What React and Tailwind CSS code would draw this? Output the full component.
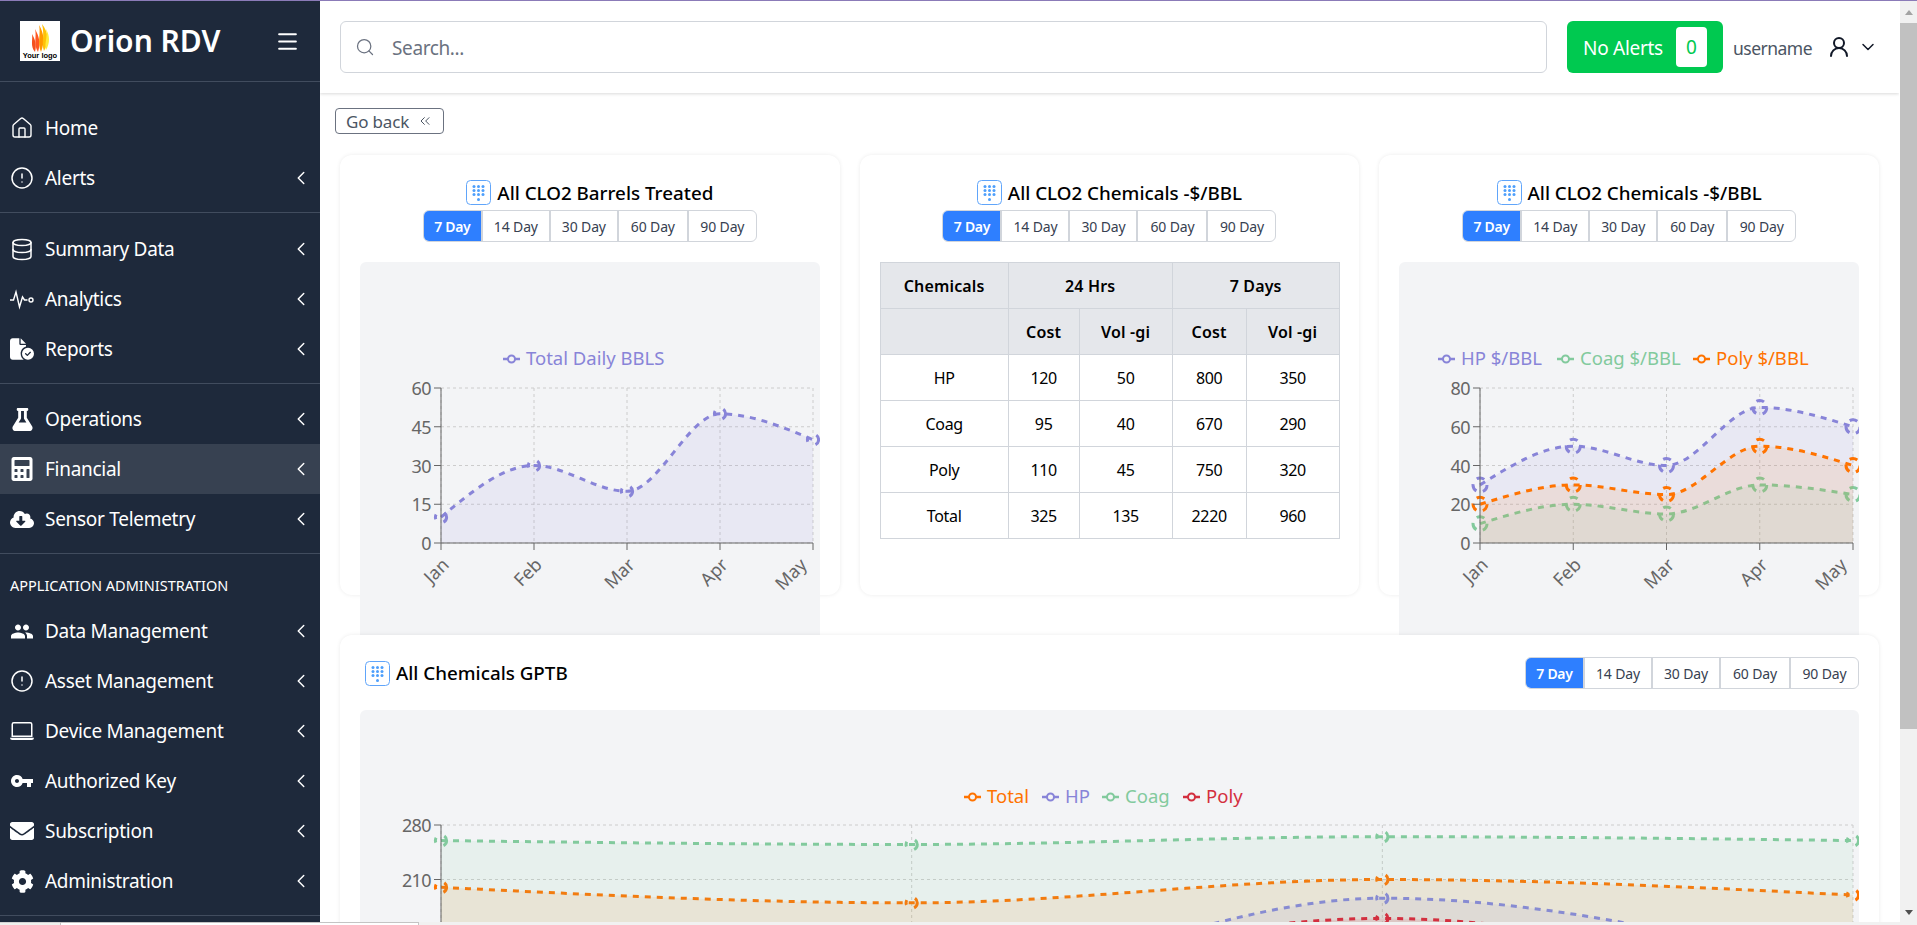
import React from "react";
import { House, CircleAlert, Database, Search, ChevronLeft, ChevronDown, ChevronsLeft, UserRound, Menu } from "lucide-react";
import { FaFlask, FaCalculator, FaCloudDownloadAlt, FaCog, FaEnvelope } from "react-icons/fa";
import { FaFileCircleCheck } from "react-icons/fa6";
import { MdPeople, MdVpnKey } from "react-icons/md";
import { BsLaptop } from "react-icons/bs";

const PURPLE = "#8884d8";
const GREEN = "#82ca9d";
const ORANGE = "#ff7300";
const RED = "#d32f3f";

function Pulse({ size }) {
  return (
    <svg width={size} height={size} viewBox="0 0 24 24" fill="none" stroke="currentColor" strokeWidth="1.4">
      <path d="M0 13h3.5l2.5-8 3.5 15 3-10 2 3h3" />
      <circle cx="21" cy="13" r="2" />
    </svg>
  );
}

function Logo() {
  return (
    <div className="w-10 h-10 bg-white flex flex-col items-center shrink-0">
      <svg width="20" height="30" viewBox="0 0 20 30" className="mt-[2px] shrink-0">
        <path d="M5 29C0 23 3 17 2 11c3 5 5 11 3 18z" fill="#f4511e" />
        <path d="M8 29C3 21 7 13 5 6c4 7 6 14 3 23z" fill="#ff5722" />
        <path d="M11 29C7 20 11 10 9 2c5 8 6 17 2 27z" fill="#ff9800" />
        <path d="M14 28c-3-8 1-15-2-27 6 8 8 17 2 27z" fill="#ffc107" />
        <path d="M16 27c-2-7 2-12 0-21 4 7 4 14 0 21z" fill="#ffeb3b" />
      </svg>
      <span className="text-[7.5px] leading-[8px] font-bold text-black -mt-[1px] whitespace-nowrap font-['Liberation_Sans',sans-serif]">Your logo</span>
    </div>
  );
}

function NavItem({ icon, label, arrow = true, active = false }) {
  return (
    <div className={"flex items-center h-[50px] pl-[10px] pr-[8px] text-[19px] text-white " + (active ? "bg-[#374151]" : "")}>
      <span className="w-6 flex justify-center shrink-0">{icon}</span>
      <span className="ml-[11px] flex-1 tracking-[-0.015em]">{label}</span>
      {arrow && <ChevronLeft size={22} strokeWidth={1.6} />}
    </div>
  );
}

function Sidebar() {
  const line = "border-b border-[#414c5e]";
  return (
    <aside className="w-[320px] shrink-0 bg-[#1e293b] flex flex-col overflow-hidden">
      <div className={"h-[81px] flex items-center pl-5 pr-[20px] " + line}>
        <Logo />
        <span className="ml-[10px] flex-1 text-[30px] leading-none font-semibold text-white">Orion RDV</span>
        <Menu size={25} className="text-white" />
      </div>
      <div className={"pt-[21px] pb-[9px] " + line}>
        <NavItem icon={<House size={28} strokeWidth={1.4} />} label="Home" arrow={false} />
        <NavItem icon={<CircleAlert size={26} strokeWidth={1.5} />} label="Alerts" />
      </div>
      <div className={"pt-[11px] pb-[9px] " + line}>
        <NavItem icon={<Database size={27} strokeWidth={1.5} />} label="Summary Data" />
        <NavItem icon={<Pulse size={24} />} label="Analytics" />
        <NavItem icon={<FaFileCircleCheck size={24} />} label="Reports" />
      </div>
      <div className={"pt-[10px] pb-[9px] " + line}>
        <NavItem icon={<FaFlask size={23} />} label="Operations" />
        <NavItem icon={<FaCalculator size={24} />} label="Financial" active />
        <NavItem icon={<FaCloudDownloadAlt size={25} />} label="Sensor Telemetry" />
      </div>
      <div className="pt-[21px] pb-[11px] pl-[10px] text-[14.5px] leading-[20px] text-white">APPLICATION ADMINISTRATION</div>
      <div className={"pb-[9px] " + line}>
        <NavItem icon={<MdPeople size={25} />} label="Data Management" />
        <NavItem icon={<CircleAlert size={26} strokeWidth={1.5} />} label="Asset Management" />
        <NavItem icon={<BsLaptop size={24} />} label="Device Management" />
        <NavItem icon={<MdVpnKey size={26} />} label="Authorized Key" />
        <NavItem icon={<FaEnvelope size={24} />} label="Subscription" />
        <NavItem icon={<FaCog size={23} />} label="Administration" />
      </div>
    </aside>
  );
}

function Topbar() {
  return (
    <header className="h-[92px] shrink-0 flex items-center pl-5 pr-[21px] bg-white shadow-[0_1px_3px_rgba(0,0,0,0.15)] relative z-20">
      <div className="flex-1 h-[52px] flex items-center border border-[#d1d5db] rounded-md pl-[14px]">
        <Search size={20} strokeWidth={1.5} className="text-[#6b7280]" />
        <span className="ml-[17px] mt-[2px] text-[19px] text-[#6b7280] tracking-[-0.02em]">Search...</span>
      </div>
      <div className="ml-5 w-[156px] h-[52px] flex items-center justify-between pl-4 pr-4 bg-[#00c950] rounded-md text-[19px] text-white">
        <span className="mt-[2px] tracking-[-0.015em]">No Alerts</span>
        <span className="w-[31px] h-10 flex items-center justify-center bg-white rounded text-[#00c950]">0</span>
      </div>
      <span className="ml-[10px] mt-[2px] text-[17.5px] text-[#4b5563] tracking-[-0.03em]">username</span>
      <UserRound size={24} strokeWidth={2} className="ml-[15px] text-[#111827]" />
      <ChevronDown size={20} strokeWidth={1.8} className="ml-[7px] text-[#111827]" />
    </header>
  );
}

function DialIcon() {
  const dots = [[8, 6.5], [12.5, 6.5], [17, 6.5], [8, 10.5], [12.5, 10.5], [17, 10.5], [8, 14.5], [12.5, 14.5], [17, 14.5], [12.5, 19.5]];
  return (
    <svg width="25" height="25" viewBox="0 0 25 25" className="shrink-0">
      <rect x="0.5" y="0.5" width="24" height="24" rx="4" fill="none" stroke="#60a5fa" />
      {dots.map(([x, y]) => (
        <circle key={x + "-" + y} cx={x} cy={y} r="1.5" fill="#4d9ffc" />
      ))}
    </svg>
  );
}

function RangeTabs() {
  const tabs = [
    ["14 Day", "w-[68px]"],
    ["30 Day", "w-[68px]"],
    ["60 Day", "w-[70px]"],
    ["90 Day", "w-[69px]"],
  ];
  return (
    <div className="inline-flex h-[32px] border border-[#d1d5db] rounded-md overflow-hidden text-[14px] bg-white">
      <span className="w-[57px] flex items-center justify-center bg-[#2e7fff] text-white font-semibold tracking-[-0.02em]">7 Day</span>
      {tabs.map(([t, w]) => (
        <span key={t} className={w + " flex items-center justify-center border-l-2 border-[#d1d5db] text-[#374151] tracking-[-0.01em]"}>{t}</span>
      ))}
    </div>
  );
}

function monotonePath(pts) {
  const sign = (v) => (v < 0 ? -1 : 1);
  const n = pts.length;
  const slopes = [];
  for (let i = 1; i < n - 1; i++) {
    const [x0, y0] = pts[i - 1];
    const [x1, y1] = pts[i];
    const [x2, y2] = pts[i + 1];
    const h0 = x1 - x0;
    const h1 = x2 - x1;
    const s0 = (y1 - y0) / h0;
    const s1 = (y2 - y1) / h1;
    const p = (s0 * h1 + s1 * h0) / (h0 + h1);
    slopes[i] = (sign(s0) + sign(s1)) * Math.min(Math.abs(s0), Math.abs(s1), 0.5 * Math.abs(p)) || 0;
  }
  const h = pts[1][0] - pts[0][0];
  slopes[0] = (3 * (pts[1][1] - pts[0][1])) / h / 2 - slopes[1] / 2;
  const hl = pts[n - 1][0] - pts[n - 2][0];
  slopes[n - 1] = (3 * (pts[n - 1][1] - pts[n - 2][1])) / hl / 2 - slopes[n - 2] / 2;
  let d = "M" + pts[0][0] + "," + pts[0][1];
  for (let i = 1; i < n; i++) {
    const dx = (pts[i][0] - pts[i - 1][0]) / 3;
    d += "C" + (pts[i - 1][0] + dx) + "," + (pts[i - 1][1] + dx * slopes[i - 1]) + "," + (pts[i][0] - dx) + "," + (pts[i][1] - dx * slopes[i]) + "," + pts[i][0] + "," + pts[i][1];
  }
  return d;
}

function AreaChart({ width, height, left, right, top, bottom, max, ticks, labels, series, legend, rotate = true }) {
  const xs = labels.map((_, i) => left + (i * (right - left)) / (labels.length - 1));
  const yOf = (v) => bottom - (v / max) * (bottom - top);
  return (
    <svg width={width} height={height} className="block font-['Noto_Sans',sans-serif]">
      {legend.map((l) => (
        <g key={l.text}>
          <line x1={l.x} x2={l.x + 17} y1={l.y} y2={l.y} stroke={l.color} strokeWidth="2.5" />
          <circle cx={l.x + 8.5} cy={l.y} r="3.5" fill="#f3f4f6" stroke={l.color} strokeWidth="2" />
          <text x={l.x + 23} y={l.y + 6} fontSize="18.5" fill={l.color}>{l.text}</text>
        </g>
      ))}
      {ticks.map((t) => (
        <line key={t} x1={left} x2={right} y1={yOf(t)} y2={yOf(t)} stroke="#ccc" strokeDasharray="3 3" />
      ))}
      {xs.map((x) => (
        <line key={x} x1={x} x2={x} y1={top} y2={bottom} stroke="#ccc" strokeDasharray="3 3" />
      ))}
      {series.map((s) => {
        const pts = s.values.map((v, i) => [xs[i], yOf(v)]);
        const d = monotonePath(pts);
        return (
          <g key={s.color}>
            <path d={d + "L" + right + "," + bottom + "L" + left + "," + bottom + "Z"} fill={s.color} fillOpacity="0.1" />
            <path d={d} fill="none" stroke={s.color} strokeWidth="3" strokeDasharray="6 6" />
            {pts.map(([x, y]) => (
              <circle
                key={x}
                cx={x}
                cy={y}
                r={s.r || 5.6}
                fill="none"
                stroke={s.color}
                strokeWidth="3"
                strokeDasharray={s.r ? "8 6.67" : "12 9 5 9.2"}
                strokeDashoffset={s.r ? 0 : 6}
              />
            ))}
          </g>
        );
      })}
      <line x1={left} x2={left} y1={top} y2={bottom} stroke="#666" />
      <line x1={left} x2={right} y1={bottom} y2={bottom} stroke="#666" />
      {ticks.map((t) => (
        <g key={t}>
          <line x1={left - 7} x2={left} y1={yOf(t)} y2={yOf(t)} stroke="#666" />
          <text x={left - 10} y={yOf(t) + 7} textAnchor="end" fontSize="18" fill="#666" letterSpacing="-0.6">{t}</text>
        </g>
      ))}
      {labels.map((l, i) => {
        const tx = xs[i] + (i === labels.length - 1 ? -5 : 9);
        const ty = bottom + 23;
        return (
          <g key={l}>
            <line x1={xs[i]} x2={xs[i]} y1={bottom} y2={bottom + 7} stroke="#666" />
            {rotate && (
              <text x={tx} y={ty} textAnchor="end" fontSize="18" fill="#666" transform={"rotate(-45 " + tx + " " + ty + ")"}>{l}</text>
            )}
          </g>
        );
      })}
    </svg>
  );
}

const MONTHS = ["Jan", "Feb", "Mar", "Apr", "May"];

function ChartPanel({ children }) {
  return <div className="w-[460px] h-[400px] mx-5 mt-5 bg-[#f3f4f6] rounded-md overflow-hidden">{children}</div>;
}

function CardHead({ title }) {
  return (
    <div className="flex flex-col items-center">
      <div className="flex items-center gap-[6px] h-[25px]">
        <DialIcon />
        <span className="text-[18.8px] font-medium text-black">{title}</span>
      </div>
      <div className="mt-[5px]">
        <RangeTabs />
      </div>
    </div>
  );
}

function ChemTable() {
  const rows = [
    ["HP", 120, 50, 800, 350],
    ["Coag", 95, 40, 670, 290],
    ["Poly", 110, 45, 750, 320],
    ["Total", 325, 135, 2220, 960],
  ];
  const th = "border border-[#d1d5db] bg-[#e5e7eb] font-semibold h-[46px] p-0 tracking-[0.01em]";
  const td = "border border-[#d1d5db] h-[46px] p-0 tracking-[-0.02em]";
  return (
    <table className="mx-5 mt-5 w-[459px] table-fixed border-collapse text-[16px] text-black text-center">
      <colgroup>
        <col className="w-[128px]" />
        <col className="w-[71px]" />
        <col className="w-[93px]" />
        <col className="w-[74px]" />
        <col className="w-[93px]" />
      </colgroup>
      <thead>
        <tr>
          <th className={th}>Chemicals</th>
          <th className={th} colSpan={2}>24 Hrs</th>
          <th className={th} colSpan={2}>7 Days</th>
        </tr>
        <tr>
          <th className={th}></th>
          <th className={th}>Cost</th>
          <th className={th}>Vol -gi</th>
          <th className={th}>Cost</th>
          <th className={th}>Vol -gi</th>
        </tr>
      </thead>
      <tbody>
        {rows.map((r) => (
          <tr key={r[0]}>
            {r.map((c, i) => (
              <td key={i} className={td}>{c}</td>
            ))}
          </tr>
        ))}
      </tbody>
    </table>
  );
}

function Scrollbar() {
  return (
    <div className="w-[18px] shrink-0 bg-[#f1f1f1] flex flex-col items-center border-l border-white relative z-30">
      <div className="h-[22px] shrink-0 flex items-center justify-center">
        <span className="w-0 h-0 border-x-[4px] border-x-transparent border-b-[5px] border-b-[#a3a3a3]"></span>
      </div>
      <div className="w-full h-[706px] shrink-0 bg-[#c1c1c1]"></div>
      <div className="flex-1"></div>
      <div className="h-[20px] shrink-0 flex items-center justify-center">
        <span className="w-0 h-0 border-x-[4px] border-x-transparent border-t-[5px] border-t-[#505050]"></span>
      </div>
    </div>
  );
}

const cardClass = "h-[440px] bg-white rounded-xl shadow-[0_0_4px_rgba(0,0,0,0.08)] pt-[25px]";

export default function App() {
  return (
    <div className="w-[1917px] h-[925px] overflow-hidden flex flex-col bg-white font-['Noto_Sans',sans-serif]">
      <div className="h-px shrink-0 bg-[#8b7bb8]"></div>
      <div className="flex-1 flex min-h-0">
        <Sidebar />
        <main className="flex-1 min-w-0 flex flex-col overflow-hidden">
          <Topbar />
          <div className="flex-1 min-h-0 overflow-hidden">
            <div className="pt-[15px] pl-[15px]">
              <div className="inline-flex items-center h-[26px] px-[10px] border border-[#6b7280] rounded-sm text-[17px] text-[#4b5563] tracking-[-0.01em]">
                <span className="mt-[2px]">Go back</span>
                <ChevronsLeft size={16} strokeWidth={1.5} className="ml-[8px]" />
              </div>
            </div>
            <div className="grid grid-cols-3 gap-5 px-5 mt-[21px]">
              <section className={cardClass}>
                <CardHead title="All CLO2 Barrels Treated" />
                <ChartPanel>
                  <AreaChart
                    width={460}
                    height={400}
                    left={81}
                    right={453}
                    top={126}
                    bottom={281}
                    max={60}
                    ticks={[0, 15, 30, 45, 60]}
                    labels={MONTHS}
                    series={[{ color: PURPLE, values: [10, 30, 20, 50, 40] }]}
                    legend={[{ text: "Total Daily BBLS", color: PURPLE, x: 143, y: 97 }]}
                  />
                </ChartPanel>
              </section>
              <section className={cardClass}>
                <CardHead title="All CLO2 Chemicals -$/BBL" />
                <ChemTable />
              </section>
              <section className={cardClass}>
                <CardHead title="All CLO2 Chemicals -$/BBL" />
                <ChartPanel>
                  <AreaChart
                    width={460}
                    height={400}
                    left={81}
                    right={454}
                    top={126}
                    bottom={281}
                    max={80}
                    ticks={[0, 20, 40, 60, 80]}
                    labels={MONTHS}
                    series={[
                      { color: PURPLE, values: [30, 50, 40, 70, 60], r: 7 },
                      { color: GREEN, values: [10, 20, 15, 30, 25], r: 7 },
                      { color: ORANGE, values: [20, 30, 25, 50, 40], r: 7 },
                    ]}
                    legend={[
                      { text: "HP $/BBL", color: PURPLE, x: 39, y: 97 },
                      { text: "Coag $/BBL", color: GREEN, x: 158, y: 97 },
                      { text: "Poly $/BBL", color: ORANGE, x: 294, y: 97 },
                    ]}
                  />
                </ChartPanel>
              </section>
            </div>
            <section className="relative z-10 mx-5 mt-10 h-[600px] bg-white rounded-xl shadow-[0_0_4px_rgba(0,0,0,0.08)] px-5 pt-[22px]">
              <div className="flex items-center justify-between h-[32px]">
                <div className="flex items-center gap-[6px] pl-[5px]">
                  <DialIcon />
                  <span className="text-[18.8px] font-medium text-black">All Chemicals GPTB</span>
                </div>
                <RangeTabs />
              </div>
              <div className="mt-[21px] h-[500px] bg-[#f3f4f6] rounded-md overflow-hidden">
                <AreaChart
                  width={1499}
                  height={500}
                  left={81}
                  right={1493}
                  top={115}
                  bottom={333}
                  max={280}
                  ticks={[210, 280]}
                  labels={["Jan", "Feb", "Mar", "Apr"]}
                  rotate={false}
                  series={[
                    { color: ORANGE, values: [200, 180, 210, 190] },
                    { color: PURPLE, values: [100, 75, 186, 90] },
                    { color: GREEN, values: [260, 255, 265, 260] },
                    { color: RED, values: [70, 90, 160, 60] },
                  ]}
                  legend={[
                    { text: "Total", color: ORANGE, x: 604, y: 87 },
                    { text: "HP", color: PURPLE, x: 682, y: 87 },
                    { text: "Coag", color: GREEN, x: 742, y: 87 },
                    { text: "Poly", color: RED, x: 823, y: 87 },
                  ]}
                />
              </div>
            </section>
          </div>
        </main>
        <Scrollbar />
      </div>
      <div className="h-[3px] shrink-0 flex">
        <div className="w-[60px] bg-[#eff1ee] border-t border-[#d4d4d4]"></div>
        <div className="w-[359px] bg-white border-t border-x border-[#c4c4c4]"></div>
        <div className="flex-1 bg-[#f1f1f1]"></div>
      </div>
    </div>
  );
}
